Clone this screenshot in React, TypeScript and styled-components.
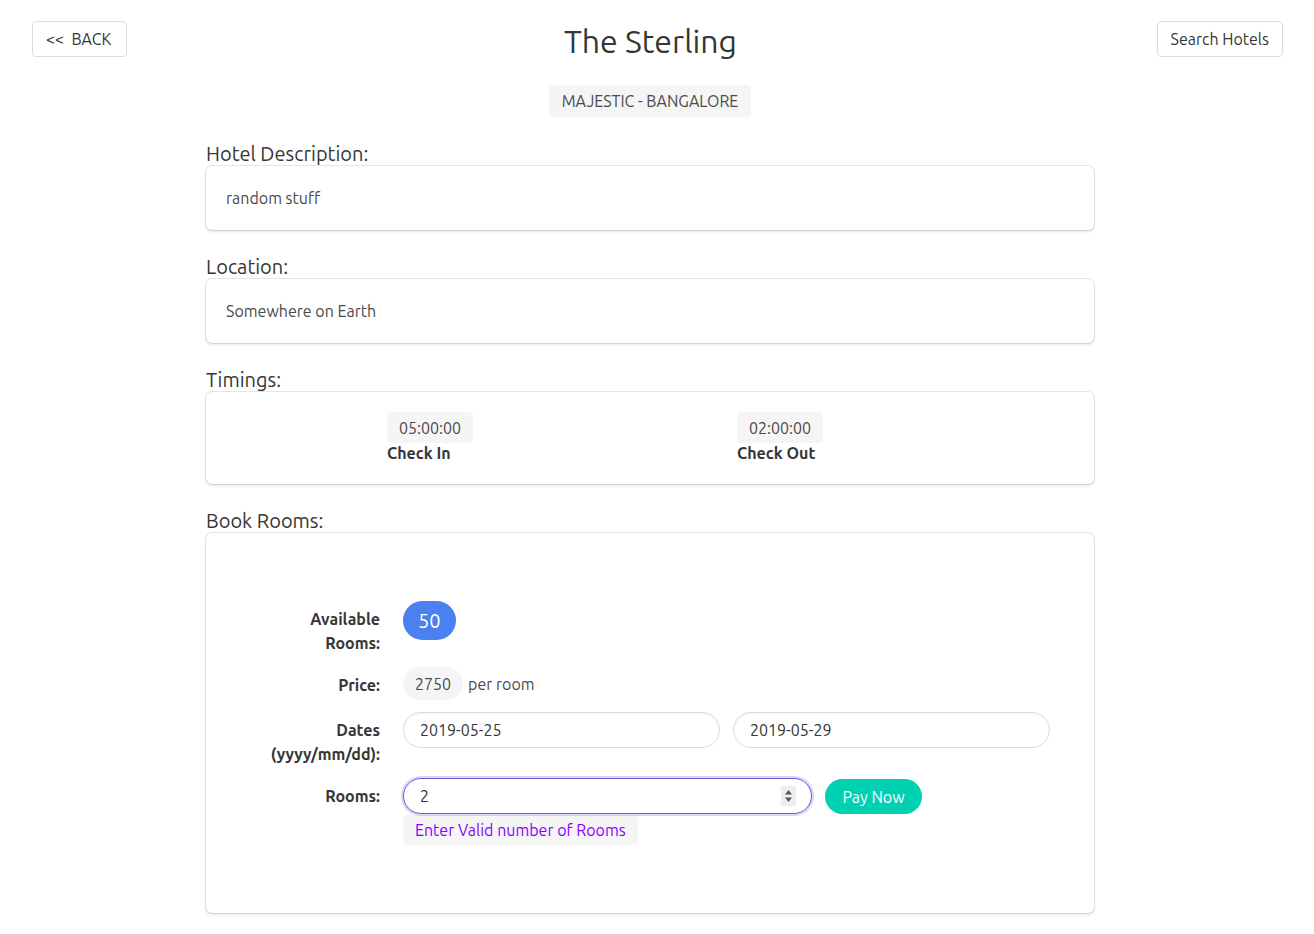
import React from "react";
import styled, { createGlobalStyle } from "styled-components";

const GlobalStyle = createGlobalStyle`
  html, body { margin: 0; padding: 0; background: #fff; }
  body {
    font-family: "Ubuntu", "Noto Sans", "Open Sans", sans-serif;
    font-size: 16px;
    color: #4a4a4a;
    line-height: 1.5;
  }
  * { box-sizing: border-box; }
  input[type=number]::-webkit-inner-spin-button,
  input[type=number]::-webkit-outer-spin-button { -webkit-appearance: none; margin: 0; }
`;

const Page = styled.div`
  padding: 21px 31px 40px 32px;
`;

const Header = styled.header`
  display: grid;
  grid-template-columns: 1fr auto 1fr;
  align-items: start;
`;

const NavButton = styled.button<{ $align: "start" | "end" }>`
  justify-self: ${(p) => p.$align};
  height: 36px;
  padding: ${(p) => (p.$align === "start" ? "0 15px 0 13px" : "0 13px")};
  font-family: inherit;
  font-size: 16px;
  color: #363636;
  background: #fff;
  border: 1px solid #dbdbdb;
  border-radius: 4px;
  cursor: pointer;
  white-space: pre;
`;

const Title = styled.h1`
  margin: 0;
  padding-right: 14px;
  font-size: 32px;
  font-weight: 400;
  line-height: 41px;
  color: #363636;
`;

const Main = styled.main`
  padding-right: 15px;
`;

const Column = styled.div`
  width: 888px;
  margin: 0 auto;
  display: flex;
  flex-direction: column;
`;

const TagRow = styled.div`
  display: flex;
  justify-content: center;
  margin-top: 23px;
  margin-bottom: 24px;
`;

const Tag = styled.span<{ $radius?: string; $height?: number; $size?: number; $bg?: string; $color?: string; $pad?: number }>`
  display: inline-flex;
  align-items: center;
  justify-content: center;
  height: ${(p) => p.$height ?? 32}px;
  padding: 0 ${(p) => p.$pad ?? 12}px;
  font-size: ${(p) => p.$size ?? 16}px;
  line-height: 1;
  background: ${(p) => p.$bg ?? "#f5f5f5"};
  color: ${(p) => p.$color ?? "#4a4a4a"};
  border-radius: ${(p) => p.$radius ?? "4px"};
  white-space: nowrap;
`;

const Section = styled.section`
  display: flex;
  flex-direction: column;
  & + & { margin-top: 24px; }
`;

const SectionLabel = styled.div`
  font-size: 20px;
  line-height: 25px;
  color: #363636;
`;

const Box = styled.div<{ $pad?: string }>`
  background: #fff;
  border-radius: 6px;
  box-shadow: 0 2px 3px rgba(10, 10, 10, 0.1), 0 0 0 1px rgba(10, 10, 10, 0.1);
  padding: ${(p) => p.$pad ?? "20px"};
  color: #4a4a4a;
`;

const Timings = styled.div`
  display: grid;
  grid-template-columns: 350px 350px;
  padding-left: 161px;
`;

const TimeItem = styled.div`
  display: flex;
  flex-direction: column;
  align-items: flex-start;
`;

const TimeCaption = styled.div`
  font-weight: 700;
  color: #363636;
  line-height: 21px;
`;

const Form = styled.div`
  display: flex;
  flex-direction: column;
  gap: 12px;
`;

const FieldRow = styled.div`
  display: flex;
  align-items: flex-start;
`;

const FieldLabel = styled.label`
  flex: 0 0 154px;
  margin-right: 23px;
  padding-top: 6px;
  text-align: right;
  font-weight: 700;
  color: #363636;
  line-height: 24px;
`;

const FieldBody = styled.div<{ $align?: string }>`
  display: flex;
  align-items: ${(p) => p.$align ?? "center"};
  gap: 13px;
  flex-wrap: wrap;
`;

const Plain = styled.span`
  margin-left: -8px;
`;

const InputWrap = styled.div<{ $width: number }>`
  position: relative;
  width: ${(p) => p.$width}px;
`;

const Input = styled.input<{ $focused?: boolean }>`
  width: 100%;
  height: 36px;
  padding: 0 16px;
  font-family: inherit;
  font-size: 16px;
  color: #363636;
  background: #fff;
  border: 1px solid ${(p) => (p.$focused ? "#7957d5" : "#dbdbdb")};
  border-radius: 999px;
  box-shadow: ${(p) => (p.$focused ? "0 0 0 2px rgba(121, 87, 213, 0.25)" : "inset 0 1px 2px rgba(10,10,10,0.05)")};
  outline: none;
`;

const Spinner = styled.span`
  position: absolute;
  right: 16px;
  top: 8px;
  width: 15px;
  height: 20px;
  background: #ededed;
  display: flex;
  align-items: center;
  justify-content: center;
`;

const RoomsControl = styled.div`
  display: flex;
  flex-direction: column;
  align-items: flex-start;
  gap: 1px;
`;

const PayButton = styled.button`
  height: 35px;
  width: 97px;
  margin-top: 1px;
  font-family: inherit;
  font-size: 16px;
  color: #fff;
  background: #00d1b2;
  border: none;
  border-radius: 999px;
  cursor: pointer;
`;

export default function App() {
  return (
    <>
      <GlobalStyle />
      <Page>
        <Header>
          <NavButton $align="start">{"<<  BACK"}</NavButton>
          <Title>The Sterling</Title>
          <NavButton $align="end">Search Hotels</NavButton>
        </Header>
        <Main>
          <Column>
            <TagRow>
              <Tag $pad={13}>MAJESTIC - BANGALORE</Tag>
            </TagRow>

            <Section>
              <SectionLabel>Hotel Description:</SectionLabel>
              <Box>random stuff</Box>
            </Section>

            <Section>
              <SectionLabel>Location:</SectionLabel>
              <Box>Somewhere on Earth</Box>
            </Section>

            <Section>
              <SectionLabel>Timings:</SectionLabel>
              <Box>
                <Timings>
                  <TimeItem>
                    <Tag $height={31}>05:00:00</Tag>
                    <TimeCaption>Check In</TimeCaption>
                  </TimeItem>
                  <TimeItem>
                    <Tag $height={31}>02:00:00</Tag>
                    <TimeCaption>Check Out</TimeCaption>
                  </TimeItem>
                </Timings>
              </Box>
            </Section>

            <Section>
              <SectionLabel>Book Rooms:</SectionLabel>
              <Box $pad="68px 20px 68px">
                <Form>
                  <FieldRow>
                    <FieldLabel>Available<br />Rooms:</FieldLabel>
                    <FieldBody>
                      <Tag $height={39} $size={20} $bg="#4a80f0" $color="#fff" $radius="999px" $pad={15}>50</Tag>
                    </FieldBody>
                  </FieldRow>

                  <FieldRow>
                    <FieldLabel>Price:</FieldLabel>
                    <FieldBody>
                      <Tag $height={33} $radius="999px">2750</Tag>
                      <Plain>per room</Plain>
                    </FieldBody>
                  </FieldRow>

                  <FieldRow>
                    <FieldLabel>Dates<br />(yyyy/mm/dd):</FieldLabel>
                    <FieldBody>
                      <InputWrap $width={317}>
                        <Input defaultValue="2019-05-25" />
                      </InputWrap>
                      <InputWrap $width={317}>
                        <Input defaultValue="2019-05-29" />
                      </InputWrap>
                    </FieldBody>
                  </FieldRow>

                  <FieldRow>
                    <FieldLabel>Rooms:</FieldLabel>
                    <FieldBody $align="flex-start">
                      <RoomsControl>
                        <InputWrap $width={409}>
                          <Input type="number" defaultValue="2" $focused />
                          <Spinner>
                            <svg width="9" height="14" viewBox="0 0 9 14">
                              <path d="M4.5 1 L8 5.5 L1 5.5 Z" fill="#555" />
                              <path d="M4.5 13 L8 8.5 L1 8.5 Z" fill="#555" />
                            </svg>
                          </Spinner>
                        </InputWrap>
                        <Tag $height={30} $color="#8b00ff" $pad={12}>
                          Enter Valid number of Rooms
                        </Tag>
                      </RoomsControl>
                      <PayButton>Pay Now</PayButton>
                    </FieldBody>
                  </FieldRow>
                </Form>
              </Box>
            </Section>
          </Column>
        </Main>
      </Page>
    </>
  );
}
